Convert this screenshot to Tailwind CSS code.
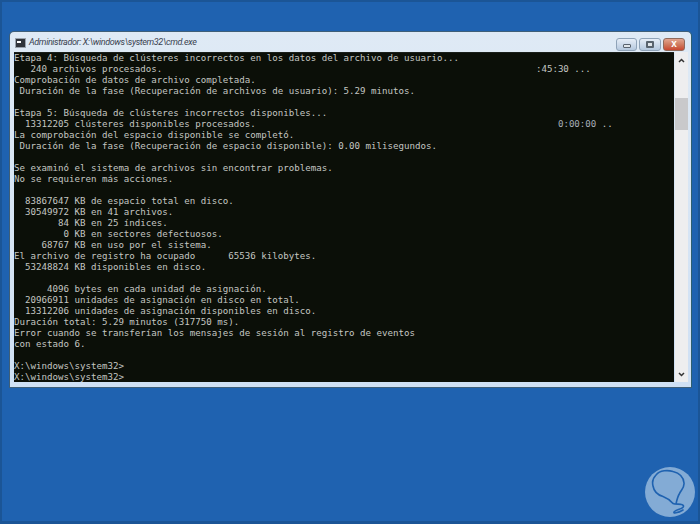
<!DOCTYPE html>
<html><head><meta charset="utf-8"><script src="https://cdn.jsdelivr.net/npm/@tailwindcss/browser@4"></script></head>
<body class="m-0">
<div class="w-[700px] h-[524px] overflow-hidden bg-[#1f62b0] border-2 border-b-[3px] border-[#1b5596] pl-[7px] pt-[29px] relative">
  <div class="w-[683px] h-[357px] rounded-t-[5px] border border-[#3f5f78] border-r-[#2f5f70] bg-gradient-to-b from-[#dfeaf5] to-[#cfe0f4] flex flex-col pl-[4px] pr-[3px] pb-[5px]">
    <div class="h-[20px] flex items-center shrink-0 relative">
      <div class="w-[11px] h-[10px] bg-[#30343a] border border-[#9aa3ad] ml-[1px] shrink-0 mt-[2px] flex items-start"><span class="block w-[4px] h-[2px] bg-white mt-[2px] ml-[1px]"></span></div>
      <span class="ml-[3px] mt-[2px] italic text-[9px] tracking-[-0.38px] text-[#3a4250] font-['Roboto',sans-serif] whitespace-nowrap">Administrador: X:\windows\system32\cmd.exe</span>
      <div class="ml-auto flex gap-[2px] mr-[3px] mt-[4px]">
        <div class="w-[21px] h-[13px] rounded-[3px] border border-[#8fa3b8] bg-gradient-to-b from-[#e6eef7] to-[#b5c8de] flex items-center justify-center"><span class="block w-[8px] h-[4px] mt-[3px] bg-[#dfe5ea] border border-[#59636e] rounded-[1px]"></span></div>
        <div class="w-[22px] h-[13px] rounded-[3px] border border-[#8fa3b8] bg-gradient-to-b from-[#e6eef7] to-[#b5c8de] flex items-center justify-center"><span class="block w-[8px] h-[7px] bg-[#dfe5ea] border-2 border-[#59636e] rounded-[1px]"></span></div>
        <div class="w-[22px] h-[13px] rounded-[3px] border border-[#8f6a5c] bg-gradient-to-b from-[#e2a58f] via-[#cf7b60] to-[#c9462f] flex items-center justify-center text-white font-bold text-[10px] leading-none font-['Liberation_Sans',sans-serif]">x</div>
      </div>
    </div>
    <div class="flex flex-1 min-h-0">
      <pre class="w-[660px] h-[330px] overflow-hidden bg-[#0b0f08] border-t border-[#1a1f1a] text-[#c4c6c2] text-[9.15px] leading-[11px] font-['DejaVu_Sans_Mono',monospace]">Etapa 4: Búsqueda de clústeres incorrectos en los datos del archivo de usuario...
   240 archivos procesados.                                                                    :45:30 ...
Comprobación de datos de archivo completada.
 Duración de la fase (Recuperación de archivos de usuario): 5.29 minutos.

Etapa 5: Búsqueda de clústeres incorrectos disponibles...
  13312205 clústeres disponibles procesados.                                                       <span class="text-[#a8aeb8]">0:00:00</span> ..
La comprobación del espacio disponible se completó.
 Duración de la fase (Recuperación de espacio disponible): 0.00 milisegundos.

Se examinó el sistema de archivos sin encontrar problemas.
No se requieren más acciones.

  83867647 KB de espacio total en disco.
  30549972 KB en 41 archivos.
        84 KB en 25 índices.
         0 KB en sectores defectuosos.
     68767 KB en uso por el sistema.
El archivo de registro ha ocupado      65536 kilobytes.
  53248824 KB disponibles en disco.

      4096 bytes en cada unidad de asignación.
  20966911 unidades de asignación en disco en total.
  13312206 unidades de asignación disponibles en disco.
Duración total: 5.29 minutos (317750 ms).
Error cuando se transferían los mensajes de sesión al registro de eventos
con estado 6.

X:\windows\system32&gt;
X:\windows\system32&gt;</pre>
      <div class="w-[13px] ml-[1px] bg-[#eeeeef] flex flex-col shrink-0">
        <div class="h-[16px] flex items-center justify-center"><svg width="7" height="5" viewBox="0 0 7 5"><path d="M1 4 L3.5 1.5 L6 4" stroke="#333" stroke-width="1.5" fill="none"/></svg></div>
        <div class="h-[30px]"></div>
        <div class="h-[32px] bg-[#c9c9cb]"></div>
        <div class="flex-1"></div>
        <div class="h-[16px] flex items-center justify-center"><svg width="7" height="5" viewBox="0 0 7 5"><path d="M1 1 L3.5 3.5 L6 1" stroke="#333" stroke-width="1.5" fill="none"/></svg></div>
      </div>
    </div>
  </div>
  <svg class="absolute left-[643px] top-[465px]" width="50" height="50" viewBox="0 0 50 50">
    <circle cx="25" cy="25" r="25" fill="#83abd5"/>
    <path d="M31 37 C32 32 33 29 34.5 26.5 C37 22 39.5 20 39 16 C38.5 10 34 6 28 4.5 C23 3 15 3 11 8 C8 11 7 15 8 19 C9 25 13 28 18 29.5 C22 31 25 33 28 36.5 C31 38 38 36 38.5 39 C39 42 32 42 29.5 44.5 C27 47 33 46 38 43" stroke="#1f62b0" stroke-width="1.6" fill="none" stroke-linecap="round" stroke-linejoin="round"/>
  </svg>
</div>
</body></html>
